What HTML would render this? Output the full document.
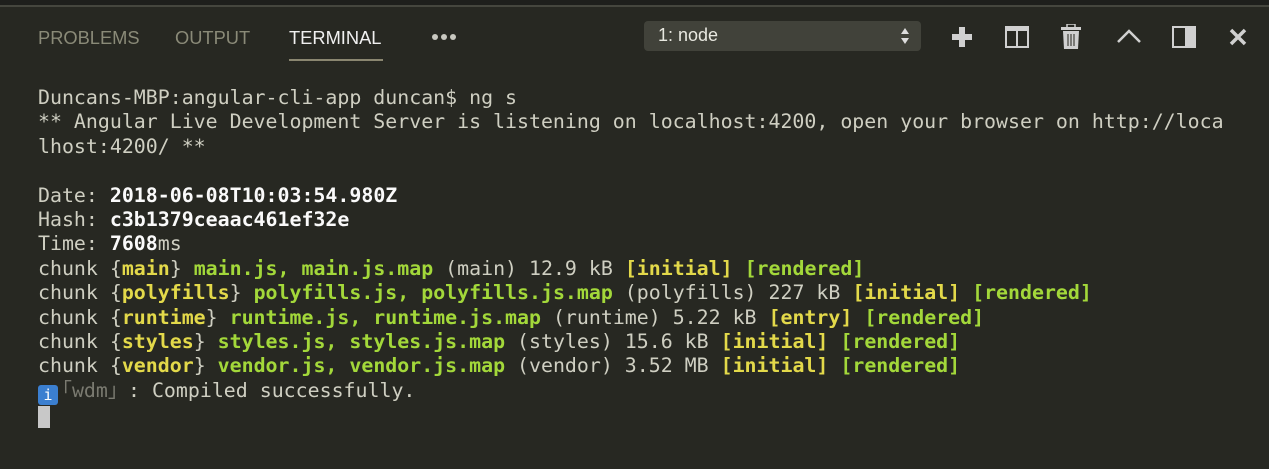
<!DOCTYPE html>
<html><head><style>
html,body{margin:0;padding:0;width:1269px;height:469px;overflow:hidden;background:#272822;}
.top{position:absolute;left:0;top:0;width:1269px;height:5px;background:#1e1f1c;border-bottom:2px solid #45463e;}
.tabs{position:absolute;top:27px;font-family:"Liberation Sans",sans-serif;font-size:18.3px;color:#8a8a78;}
.tab{position:absolute;white-space:nowrap;}
.ul{position:absolute;left:289px;top:59px;width:94px;height:2px;background:#8a8670;}
.sel{position:absolute;left:644px;top:21px;width:277px;height:30px;background:#41423a;border-radius:4px;color:#e8e8e0;font-family:"Liberation Sans",sans-serif;font-size:18px;}
.term{position:absolute;left:38px;top:86px;font-family:"DejaVu Sans Mono","Liberation Mono",monospace;font-size:19.9px;line-height:24.4px;color:#cfcfc2;white-space:pre;}
b{color:#fafafa;}
.y{color:#e3d94a;font-weight:bold;}
.g{color:#a3d83a;font-weight:bold;}
.d{color:#7a7a70;display:inline-block;width:66px;}
svg{position:absolute;}
</style></head><body>
<div class="top"></div>
<div class="tabs">
<span class="tab" style="left:38px">PROBLEMS</span>
<span class="tab" style="left:175px">OUTPUT</span>
<span class="tab" style="left:289px;color:#f0f0f0">TERMINAL</span>
</div>
<svg style="left:431px;top:33px" width="26" height="8"><circle cx="4" cy="4" r="3" fill="#c8c8c0"/><circle cx="13" cy="4" r="3" fill="#c8c8c0"/><circle cx="22" cy="4" r="3" fill="#c8c8c0"/></svg>
<div class="ul"></div>
<div class="sel"><span style="position:absolute;left:14px;top:4px">1: node</span>
<svg style="left:256px;top:6px" width="10" height="18"><path d="M1 7L5 1L9 7Z M1 11L5 17L9 11Z" fill="#ddd"/></svg></div>
<svg style="left:952px;top:27px" width="20" height="20"><path d="M7 0h6v7h7v6h-7v7H7v-7H0V7h7z" fill="#d0d0d0"/></svg>
<svg style="left:1005px;top:26px" width="24" height="22"><rect x="1" y="1" width="22" height="20" fill="none" stroke="#d0d0d0" stroke-width="2"/><rect x="1" y="1" width="22" height="4" fill="#d0d0d0"/><line x1="12" y1="1" x2="12" y2="21" stroke="#d0d0d0" stroke-width="2"/></svg>
<svg style="left:1061px;top:24px" width="20" height="26"><rect x="0" y="3" width="20" height="3" fill="#d0d0d0"/><rect x="6" y="0" width="8" height="4" fill="none" stroke="#d0d0d0" stroke-width="1.5"/><path d="M2 7h16l-1 18H3z" fill="#d0d0d0"/><path d="M7 10v12M10 10v12M13 10v12" stroke="#41423a" stroke-width="1.2"/></svg>
<svg style="left:1116px;top:28px" width="26" height="16"><path d="M2 14L13 3L24 14" fill="none" stroke="#d0d0d0" stroke-width="2.5"/></svg>
<svg style="left:1172px;top:26px" width="24" height="22"><rect x="1" y="1" width="22" height="20" fill="none" stroke="#d0d0d0" stroke-width="2"/><rect x="13" y="1" width="10" height="20" fill="#d0d0d0"/></svg>
<svg style="left:1229px;top:28px" width="18" height="18"><path d="M2 2L16 16M16 2L2 16" stroke="#d0d0d0" stroke-width="3.5"/></svg>
<div class="term">Duncans-MBP:angular-cli-app duncan$ ng s
** Angular Live Development Server is listening on localhost:4200, open your browser on http://loca
lhost:4200/ **

Date: <b>2018-06-08T10:03:54.980Z</b>
Hash: <b>c3b1379ceaac461ef32e</b>
Time: <b>7608</b>ms
chunk {<span class="y">main</span>} <span class="g">main.js, main.js.map</span> (main) 12.9 kB <span class="y">[initial]</span> <span class="g">[rendered]</span>
chunk {<span class="y">polyfills</span>} <span class="g">polyfills.js, polyfills.js.map</span> (polyfills) 227 kB <span class="y">[initial]</span> <span class="g">[rendered]</span>
chunk {<span class="y">runtime</span>} <span class="g">runtime.js, runtime.js.map</span> (runtime) 5.22 kB <span class="y">[entry]</span> <span class="g">[rendered]</span>
chunk {<span class="y">styles</span>} <span class="g">styles.js, styles.js.map</span> (styles) 15.6 kB <span class="y">[initial]</span> <span class="g">[rendered]</span>
chunk {<span class="y">vendor</span>} <span class="g">vendor.js, vendor.js.map</span> (vendor) 3.52 MB <span class="y">[initial]</span> <span class="g">[rendered]</span>
<span style="display:inline-block;width:20px;height:20px;background:#3b7fd0;border-radius:3px;color:#fff;font-size:15px;line-height:20px;text-align:center;vertical-align:-3px;margin-right:4px">i</span><span class="d">｢wdm｣</span>: Compiled successfully.
<span style="display:inline-block;width:12px;height:22px;background:#c8c8c8;vertical-align:-5px"></span></div>
</body></html>
